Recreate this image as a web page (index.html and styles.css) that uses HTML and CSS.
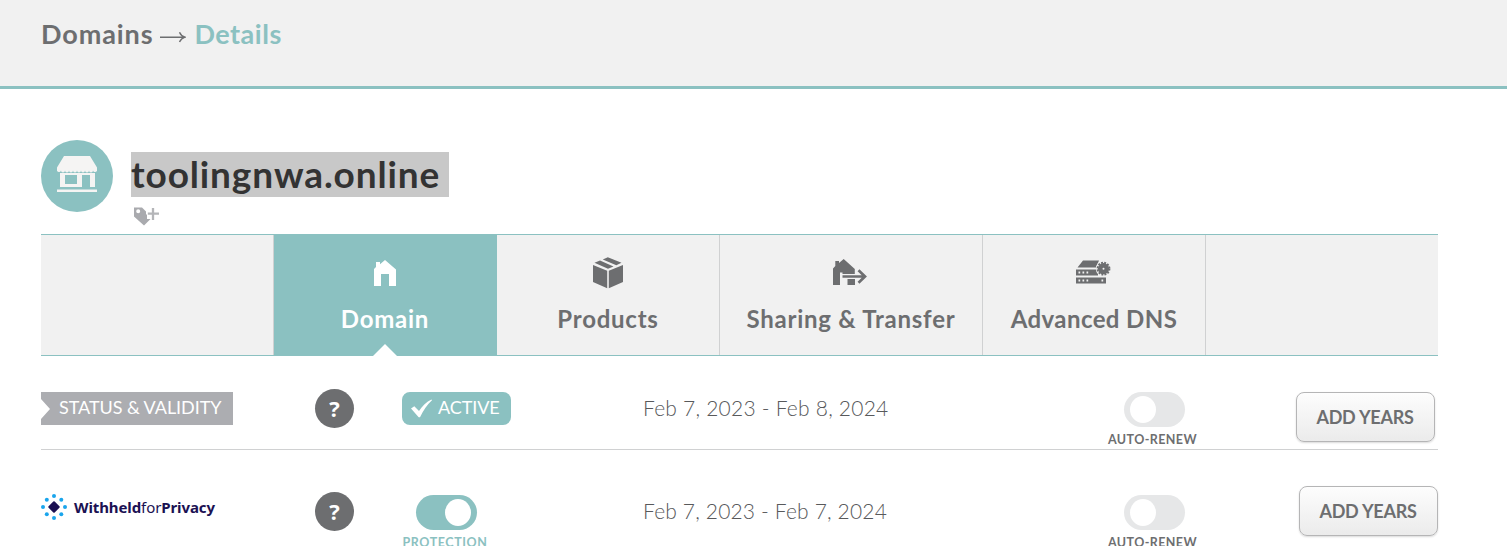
FILE: index.html
```
<!DOCTYPE html>
<html lang="en">
<head>
<meta charset="utf-8">
<title>Domains → Details</title>
<link rel="stylesheet" href="styles.css">
</head>
<body>
<header class="page-header">
  <span class="crumb">Domains</span>
  <svg class="crumb-arrow" width="26" height="12" viewBox="0 0 26 12"><path d="M0 6.2H24.5M19.5 1.2C20.5 3.6 22.3 5.4 25 6.2C22.3 7 20.5 8.7 19.5 11.1" fill="none" stroke="#6d6e70" stroke-width="1.4"/></svg>
  <span class="crumb current">Details</span>
</header>
<main class="content">
  <section class="title-bar">
    <div class="store-icon">
      <svg width="40" height="37" viewBox="0 0 40 37"><g fill="#f5f4f3"><path d="M7 0H33L40 11.5V13.5a2 2 0 0 1-4 1a2 2 0 0 1-4 0a2 2 0 0 1-4 0a2 2 0 0 1-4 0a2 2 0 0 1-4 0a2 2 0 0 1-4 0a2 2 0 0 1-4 0a2 2 0 0 1-4 0a2 2 0 0 1-4 0a2 2 0 0 1-4-1V11.5Z"/><path fill-rule="evenodd" d="M3 17H38V31H33V19H25V31H3ZM8 19V28H20V19Z"/><path d="M0 33.5H40V36H0Z"/></g></svg>
    </div>
    <div class="title-text">
      <h1><span class="domain-name">toolingnwa.online</span></h1>
      <svg class="tag-icon" width="25" height="19" viewBox="0 0 25 19"><path fill="#a9aaae" fill-rule="evenodd" d="M0 .5H8L12 4.5V7.5H13V12H16.5L10 18.6L0 9.5ZM4.2 2.3A2 2 0 1 0 4.2 6.3A2 2 0 1 0 4.2 2.3Z"/><path fill="none" stroke="#b4b5b8" stroke-width="2.3" d="M19 1V13M13.8 6.7H25"/></svg>
    </div>
  </section>
  <nav class="tabs">
    <div class="tab-spacer"></div>
    <a class="tab active"><svg class="tab-icon" width="34" height="34" viewBox="0 0 34 34"><path fill="#fff" d="M6 29V12L8 10V5H12V7.3L17 3L28 12.5V29H21V17H13V29Z"/></svg><span class="label-domain">Domain</span></a>
    <a class="tab"><svg class="tab-icon" width="34" height="34" viewBox="0 0 34 34"><g fill="#6d6e70"><path d="M2 8L16.2 13.8V31.3L2 25ZM32 8V25L17.8 31.3V13.8ZM3.5 5.8L9 3.6L22.5 9.4L17 11.7ZM11.8 2.5L16.8.2L30.5 5.7L25.3 8.2Z"/></g></svg><span class="label-products">Products</span></a>
    <a class="tab wide"><svg class="tab-icon" width="34" height="34" viewBox="0 0 34 34"><path fill="#6d6e70" d="M0 28V11.5L2.3 9V4H6V6L10.7 2L21.8 12V17H9.5V15.5H7V28ZM14.5 22H22V28H14.5Z"/><path fill="none" stroke="#f1f1f1" stroke-width="4.5" d="M11 19.5H31"/><path fill="none" stroke="#6d6e70" stroke-width="2.7" d="M9.5 19.5H31.5M25.5 13.3L32 19.5L25.5 25.7"/></svg><span class="label-sharing">Sharing &amp; Transfer</span></a>
    <a class="tab"><svg class="tab-icon" width="36" height="34" viewBox="0 0 36 34"><path fill="#6d6e70" d="M8 3.5H24L21 10.5H2.5ZM1 12.5H23V18.5H1ZM1 20.5H31V26.5H1Z"/><path fill="#f1f1f1" d="M3.5 14.5h1.7v2H3.5zM7.5 14.5h1.7v2H7.5zM11.5 14.5h1.7v2h-1.7zM3.5 22.5h1.7v2H3.5zM7.5 22.5h1.7v2H7.5zM11.5 22.5h1.7v2h-1.7zM26.5 22.5h1.7v2h-1.7z"/><circle cx="28.5" cy="11.7" r="7.7" fill="#f1f1f1"/><circle cx="28.5" cy="11.7" r="5.6" fill="#6d6e70"/><circle cx="28.5" cy="11.7" r="6" fill="none" stroke="#6d6e70" stroke-width="1.8" stroke-dasharray="1.9 1.24"/><circle cx="28.5" cy="11.7" r="1" fill="#f1f1f1"/></svg><span class="label-dns">Advanced DNS</span></a>
    <div class="tab-spacer last"></div>
  </nav>
  <section class="row">
    <div class="col-name"><span class="ribbon">STATUS &amp; VALIDITY</span></div>
    <div class="col-help"><span class="help">?</span></div>
    <div class="col-state"><span class="badge"><svg width="21" height="19" viewBox="0 0 21 19"><path fill="#fff" d="M0 9.5L3.3 7.2L8 12C11.2 7 15.5 2.7 20.5 .5L21 1.2C16.2 5.7 12.4 11 9 18.2H7.7Z"/></svg><span class="badge-text">ACTIVE</span></span></div>
    <div class="col-date"><span class="date">Feb 7, 2023 - Feb 8, 2024</span></div>
    <div class="col-renew"><span class="toggle"></span><span class="caption">AUTO-RENEW</span></div>
    <div class="col-action"><button class="button">ADD YEARS</button></div>
  </section>
  <section class="row second">
    <div class="col-name"><span class="privacy"><svg width="26" height="26" viewBox="0 0 26 26"><g fill="#1aa5ec"><circle cx="13" cy="2" r="2"/><circle cx="13" cy="24" r="2"/><circle cx="2" cy="13" r="2"/><circle cx="24" cy="13" r="2"/><circle cx="5.8" cy="5.8" r="2"/><circle cx="20.3" cy="5.8" r="2"/><circle cx="5.8" cy="20.2" r="2"/><circle cx="20.3" cy="20.2" r="2"/></g><path fill="#1b1153" stroke="#1b1153" stroke-width="2" stroke-linejoin="round" d="M13 8.3L17.7 13L13 17.7L8.3 13Z"/></svg><span class="privacy-text"><b>Withheld</b>for<b>Privacy</b></span></span></div>
    <div class="col-help"><span class="help">?</span></div>
    <div class="col-state protect"><span class="toggle on"></span><span class="caption teal">PROTECTION</span></div>
    <div class="col-date"><span class="date">Feb 7, 2023 - Feb 7, 2024</span></div>
    <div class="col-renew"><span class="toggle"></span><span class="caption">AUTO-RENEW</span></div>
    <div class="col-action"><button class="button">ADD YEARS</button></div>
  </section>
</main>
</body>
</html>
```
FILE: styles.css
```
* { box-sizing: border-box; }
html, body { height: 546px; overflow: hidden; }
body { margin: 0; background: #fff; color: #6d6e70; font-family: Lato, "Open Sans", sans-serif; }
svg { display: block; flex: none; }

.page-header { height: 89px; padding: 18px 0 0 41px; display: flex; align-items: flex-start; background: #f1f1f1; border-bottom: 3px solid #8bc1c1; }
.crumb { font-size: 27px; line-height: 32px; font-weight: 700; letter-spacing: 0.9px; white-space: nowrap; }
.crumb.current { color: #8bc1c1; letter-spacing: 0.5px; }
.crumb-arrow { margin: 13px 8px 0 7px; }

.content { width: 1397px; margin-left: 41px; }
.title-bar { height: 145px; padding-top: 51px; display: flex; gap: 18px; }
.store-icon { width: 72px; height: 72px; border-radius: 50%; background: #8bc1c1; padding: 16px 0 0 16px; }
.title-text { padding-top: 12px; }
h1 { margin: 0; width: 318px; height: 45px; background: #c8c8c8; color: #333; font-size: 37px; line-height: 43px; font-weight: 700; white-space: nowrap; }
.domain-name { letter-spacing: 0.88px; }
.tag-icon { margin: 10px 0 0 3px; }

.tabs { height: 122px; display: flex; background: #f1f1f1; border-top: 1px solid #8bc1c1; border-bottom: 1px solid #8bc1c1; }
.tab-spacer { flex: none; width: 233px; border-right: 1px solid #d0d1d2; }
.tab-spacer.last { flex: 1; width: auto; border-right: 0; }
.tab { position: relative; flex: none; width: 223px; padding-top: 22px; display: flex; flex-direction: column; align-items: center; border-right: 1px solid #d0d1d2; font-size: 24px; line-height: 28px; font-weight: 700; letter-spacing: 0.75px; white-space: nowrap; }
.tab.wide { width: 263px; }
.tab-icon { margin-bottom: 14px; }
.wide .tab-icon, .tab:nth-child(5) .tab-icon { margin-right: 2px; }
.label-dns { letter-spacing: 0.4px; }
.tab.active { background: #8bc1c1; border-color: #8bc1c1; color: #fff; }
.tab.active::after { content: ""; position: absolute; left: 99px; bottom: -1px; border: 12px solid transparent; border-top: 0; border-bottom-color: #fff; }

.row { height: 94px; display: grid; grid-template-columns: 274px 87px 241px 463px 103px 1fr; border-bottom: 1px solid #d0d1d2; }
.row.second { height: 96px; border: 0; }
.col-name { padding-top: 36px; }
.ribbon { display: block; width: 192px; height: 33px; padding-left: 18px; background: #acadb1; color: #fff; font-size: 18px; line-height: 31px; letter-spacing: -0.05px; white-space: nowrap; clip-path: polygon(0 0, 100% 0, 100% 100%, 0 100%, 0 27px, 9px 17px, 0 7px); }
.col-help { padding-top: 33px; }
.help { display: block; width: 39px; height: 39px; border-radius: 50%; background: #6d6e70; color: #fff; text-align: center; font: 700 22px/39px "Open Sans", sans-serif; }
.col-state { padding-top: 36px; }
.badge { width: 109px; height: 33px; padding-left: 9px; display: flex; align-items: center; gap: 6px; border-radius: 8px; background: #8bc1c1; color: #fff; font-size: 18px; line-height: 31px; white-space: nowrap; }
.badge-text { padding-bottom: 2px; letter-spacing: -0.1px; }
.col-date { padding-top: 38px; }
.date { color: #58595b; font-size: 21px; line-height: 28px; font-weight: 300; letter-spacing: 0.22px; white-space: nowrap; }
.col-renew { padding-top: 36px; width: 96px; display: flex; flex-direction: column; align-items: center; }
.toggle { width: 61px; height: 35px; padding: 4px 6px; display: flex; border-radius: 18px; background: #e6e7e8; }
.toggle::before { content: ""; width: 26px; height: 27px; border-radius: 50%; background: #fff; }
.toggle.on { justify-content: flex-end; background: #8bc1c1; }
.caption { margin: 5px 3px 0 0; font-size: 12.5px; line-height: 16px; font-weight: 700; letter-spacing: 0.42px; white-space: nowrap; }
.caption.teal { margin-right: 2px; color: #8bc1c1; letter-spacing: 0.58px; }
.col-action { padding-top: 36px; display: flex; justify-content: flex-end; align-items: flex-start; padding-right: 3px; }
.button { width: 139px; height: 50px; padding: 0 1px 0 0; border: 1px solid #b5b5b6; border-radius: 8px; background: linear-gradient(#fdfdfd, #ebebeb); box-shadow: 0 1px 2px rgba(0,0,0,.15); color: #6d6e70; font-family: inherit; font-size: 18px; font-weight: 700; letter-spacing: -0.25px; white-space: nowrap; }

.second .col-name { padding-top: 44px; }
.privacy { display: flex; align-items: center; color: #1b1153; font: 15px/26px "Noto Sans", sans-serif; gap: 7px; }
.privacy-text { letter-spacing: -0.1px; white-space: nowrap; }
.second .col-help { padding-top: 42px; }
.second .col-state, .second .col-renew { padding-top: 45px; }
.protect { width: 88px; display: flex; flex-direction: column; align-items: center; }
.second .col-date { padding-top: 47px; }
.second .date { letter-spacing: 0.16px; }
.second .col-action { padding: 36px 0 0; }
```
